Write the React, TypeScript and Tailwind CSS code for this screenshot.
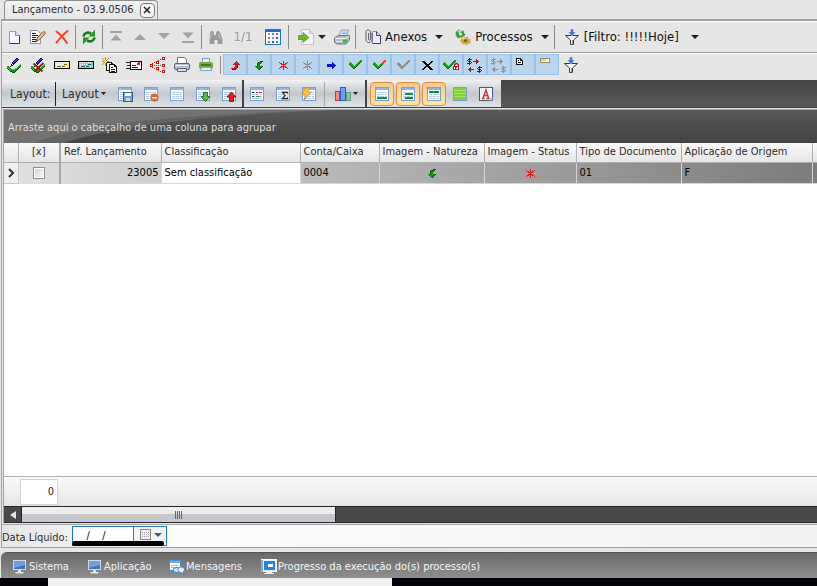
import React from "react";

type Kids = { children?: React.ReactNode };

/* ---------- drawing helpers ---------- */

function Glyph({ children, crisp = false }: Kids & { crisp?: boolean }) {
  return (
    <svg
      viewBox="0 0 16 16"
      className="size-4 shrink-0"
      fill="none"
      shapeRendering={crisp ? "crispEdges" : "auto"}
      aria-hidden="true"
    >
      {children}
    </svg>
  );
}

function Caret({ blue = false }: { blue?: boolean }) {
  return (
    <svg viewBox="0 0 8 4" className="h-1 w-2 shrink-0" aria-hidden="true">
      <path d="M0 0h8L4 4z" fill={blue ? "#3d5a8c" : "#222"} />
    </svg>
  );
}

function SmallCaret() {
  return (
    <svg viewBox="0 0 5 3" className="h-[3px] w-[5px] shrink-0" aria-hidden="true">
      <path d="M0 0h5L2.500 3z" fill="#222" />
    </svg>
  );
}

function PixelMap({ rows, colors, x: left = 0, y: top = 0 }: { rows: string[]; colors: Record<string, string>; x?: number; y?: number }) {
  return (
    <g shapeRendering="crispEdges">
      {rows.flatMap((row, y) =>
        row.split("").map((c, x) =>
          colors[c] ? <rect key={`${x}-${y}`} x={left + x} y={top + y} width="1" height="1" fill={colors[c]} /> : null,
        ),
      )}
    </g>
  );
}

/* ---------- main toolbar icons ---------- */

const NewDoc = () => (
  <Glyph>
    <path d="M3.500 2.500h6l4 4v8h-10z" fill="#f7f7ff" stroke="#9a99bd" />
    <path d="M9.500 2.500v4h4" fill="#dfe0f2" stroke="#8b8bb0" />
    <path d="M13.500 6.500v8h-10" stroke="#35345a" />
  </Glyph>
);
const EditDoc = () => (
  <Glyph>
    <path d="M.5 1.500h7l3 3v10H.5z" fill="#fff" stroke="#8a94b4" />
    <path d="M2 4.500h4M2 6.500h6M2 8.500h4M2 10.500h6M2 12.500h5" stroke="#1f1f3c" />
    <path d="M6 12l1.200-3.200L13 2.500l2.300 2L9.300 11z" fill="#e8b98a" stroke="#6d4326" strokeWidth=".8" />
    <path d="M13 2.500l1-1 2 2-.8 1z" fill="#e27b62" />
  </Glyph>
);
const RedCross = () => (
  <Glyph>
    <path d="M2.500 2.500C6 5 10 9.500 13 14M13.500 2C9.500 5 5.500 9.500 2.500 13.500" stroke="#ff3b1d" strokeWidth="2" strokeLinecap="round" />
  </Glyph>
);
const Refresh = () => (
  <Glyph>
    <path d="M2.500 7.500C2.800 4.500 6 2.500 10 4.500" stroke="#13801a" strokeWidth="2.600" />
    <path d="M14 .8v6.700H7.500z" fill="#1a9a20" />
    <path d="M13.500 8.500c-.3 3-3.500 5-7.500 3" stroke="#13801a" strokeWidth="2.600" />
    <path d="M2 15.200V8.500h6.500z" fill="#1a9a20" />
  </Glyph>
);
const First = () => <Glyph><path d="M2 2h12v2H2zM8 5.500l5.500 6h-11z" fill="#a3a3a3" /></Glyph>;
const Previous = () => <Glyph><path d="M8 5l6 6H2z" fill="#a3a3a3" /></Glyph>;
const Next = () => <Glyph><path d="M8 10L2 4h12z" fill="#a3a3a3" /></Glyph>;
const Last = () => <Glyph><path d="M2 12h12v2H2zM8 9.500L2.500 3.500h11z" fill="#a3a3a3" /></Glyph>;
const Binoculars = () => (
  <Glyph>
    <path d="M3 4l1-2h2l1 2v2h2V4l1-2h2l1 2 2.500 6v5h-5v-4h-3v4h-5v-5z" fill="#9b9b9b" />
    <path d="M4.500 5L3 10M11.500 5l1.500 5" stroke="#cfcfcf" strokeWidth=".8" />
  </Glyph>
);
const Calendar = () => (
  <Glyph crisp>
    <rect width="16" height="16" fill="#1c6fd8" />
    <rect x="1" y="3" width="14" height="12" fill="#f4f8ff" />
    <path d="M3 4h2v2H3zM7 8h2v2H7z" fill="#9a8cc4" />
    <path d="M7 4h2v2H7zM3 12h2v2H3z" fill="#3b93e6" />
    <path d="M11 4h2v2h-2zM3 8h2v2H3z" fill="#e2533f" />
    <path d="M11 8h2v2h-2zM7 12h2v2H7z" fill="#3a55a8" />
    <path d="M11 12h2v2h-2z" fill="#43a047" />
  </Glyph>
);
const Export = () => (
  <Glyph>
    <path d="M3.500.5h8l4 4v11h-12z" fill="#f6f6f6" stroke="#c4c4c4" />
    <path d="M11.500.5v4h4" fill="#ddd" stroke="#c4c4c4" />
    <path d="M0 6.500h5V3.500l6 5-6 5v-3H0z" fill="#6fb62a" stroke="#5a9a20" strokeWidth=".8" />
  </Glyph>
);
const PrinterLit = () => (
  <Glyph>
    <path d="M5 6.500L7 1h8l-2.500 5.500z" fill="#dcecfb" stroke="#7e93ad" strokeWidth=".8" />
    <path d="M8 3h5M7.500 4.500h5" stroke="#6f9bd1" strokeWidth=".7" />
    <path d="M.5 9L4 6.500h11.500V11L12 15H2.500L.5 13z" fill="#b4b9c6" stroke="#5c6070" strokeWidth=".8" />
    <path d="M1 9.500h11l3-2.500" stroke="#f5f5f5" />
    <path d="M2 12.500h6" stroke="#eee" />
    <path d="M9 10.500h4v3H9z" fill="#17c837" />
  </Glyph>
);
const Attach = () => (
  <Glyph>
    <path d="M7.500 2.500h4l4 4v8h-8z" fill="#ececfa" stroke="#8b8ab0" />
    <path d="M11.500 2.500v4h4M15.500 6.500v8h-8" stroke="#3d3b63" />
    <path d="M3.500 4v6c0 1.500 2 1.500 2 0V3c0-2.700-4.500-2.700-4.500 0v7.500c0 4 5.500 4 6 .5V4" stroke="#5d6069" />
  </Glyph>
);
const Gears = () => (
  <Glyph>
    <path d="M1 2.500L4 .5l2 1.500 2.500-.5L9 4l1.500 1.500L9 7.500 7.500 9 5 8.500 3 9.500 1.500 7.500.5 5z" fill="#3f9f45" />
    <path d="M2 2.500L4.500 1 7 2.500 4 4z" fill="#a5e39a" />
    <circle cx="5.500" cy="5" r="1.500" fill="#e6f2e2" />
    <path d="M6 8l2.500-1L10 8.500l2.500-1 1 2 2 .5-.5 2.500 1 1.500-2.500.5-1.500 1.500-2-1-2.500.5-.5-2-2-1 1-2z" fill="#d7a62c" />
    <path d="M7 8.500l1.500-.5 1.500 1.500 2.500-.5L10 10.500 7 10z" fill="#f7df85" />
    <circle cx="10.500" cy="11.500" r="1.600" fill="#6e5a1e" />
  </Glyph>
);
const Funnel = () => (
  <Glyph>
    <path d="M1.500 6.500h13L9.500 11v4.500h-3V11z" fill="#f7f7f7" stroke="#33373d" />
    <path d="M8.500 11v4.500" stroke="#9b9b9b" />
    <path d="M6.500 0h3v3h2.500L8 7 4 3h2.500z" fill="#3976cf" stroke="#dfeafb" strokeWidth=".5" />
  </Glyph>
);

/* ---------- second toolbar icons ---------- */

const PEN_CHECK = [
  ".........kk...",
  "........kbBk..",
  ".......kbBk...",
  "......kbBk....",
  ".....kbBk.....",
  ".....kBk......",
  "....kwk......G",
  "....kk......Gg",
  "gg.k.......Ggd",
  "Ggg.......Ggd.",
  "dGgg....GGgd..",
  ".dGggGGGggd...",
  "..dGgggggd....",
  "...ddgggd.....",
  ".....ddd......",
];
const PenCheck = ({ crossed = false }: { crossed?: boolean }) => (
  <Glyph>
    <PixelMap x={1} y={1} rows={PEN_CHECK} colors={{ k: "#0a0a2a", b: "#3a50ff", B: "#1224e6", w: "#fff", g: "#0c9a12", G: "#3fd040", d: "#064f0a" }} />
    {crossed && <path d="M3.500 6.500l9 8M13.500 6L5 14" stroke="#98141a" strokeWidth="1.800" />}
  </Glyph>
);
const Card = ({ fill, ink }: { fill: string; ink: string }) => (
  <Glyph crisp>
    <rect x="0" y="4" width="16" height="8" fill="#000" />
    <rect x="1" y="5" width="14" height="6" fill={fill} />
    <path d="M2 5.500h12M2 7.500h12M2 9.500h12" stroke="#fff" strokeDasharray="1 1" />
    <path d="M3 9h4v1H3zM8 9h3v1H8zM10 7h3v1h-3z" fill={ink} />
  </Glyph>
);
const PAGES = [
  "...s....s.......",
  "s..s..s.........",
  ".s.s.s..........",
  "..sYs...........",
  "ssYYYss.........",
  "..sYskkkkk......",
  ".s.skwwwwkk.....",
  "s..skwwkkkkkk...",
  "...skwwkwwwwkk..",
  "....kwwkwwwwkkk.",
  "....kwwkwkkwwwk.",
  "....kwwkwwwwwwk.",
  "....kwwkwkkkkwk.",
  "....kkkkwwwwwwk.",
  ".......kwkkkkwk.",
  ".......kkkkkkkk.",
];
const NewPages = () => <Glyph><PixelMap rows={PAGES} colors={{ s: "#b89a1c", Y: "#ffef5a", k: "#111", w: "#fff" }} /></Glyph>;
const Mail = () => (
  <Glyph crisp>
    <rect x="4" y="4" width="12" height="9" fill="#000" />
    <rect x="5" y="5" width="10" height="7" fill="#fff" />
    <path d="M0 5h5v1H0zM1 8h3v1H1zM0 11h5v1H0zM6 8h4v1H6zM6 10h6v1H6z" fill="#222" />
    <path d="M12 5h2v3h-2z" fill="#d12a2a" />
    <path d="M11 6h1v2h-1z" fill="#2855d8" />
  </Glyph>
);
const NODES = [
  "............rrr",
  "............rwr",
  "..........r.rrr",
  "........r......",
  "......rrr......",
  "....r.rwr......",
  "..r...rrr......",
  "rrr.........rrr",
  "rwr.r.r.r.r.rwr",
  "rrr.........rrr",
  "..r...rrr......",
  "....r.rwr......",
  "......rrr......",
  "........r...rrr",
  "..........r.rwr",
  "............rrr",
];
const Nodes = () => <Glyph><PixelMap rows={NODES} colors={{ r: "#d31414", w: "#fff" }} /></Glyph>;
const Printer = () => (
  <Glyph>
    <path d="M3.500 7V.5h7l2 2V7" fill="#fff" stroke="#68748a" />
    <rect x=".5" y="6.500" width="15" height="6" rx="1.500" fill="#b9c3d3" stroke="#566378" />
    <path d="M1.500 8.500h13" stroke="#f2f6fb" />
    <path d="M3.500 11.500h9v3h-9z" fill="#cfe3fb" stroke="#566378" />
  </Glyph>
);
const PrinterGreen = () => (
  <Glyph>
    <rect x="4.500" y="1.500" width="7" height="5" fill="#e9f3fd" stroke="#7aa3cf" />
    <rect x="1" y="5" width="14" height="7" rx="2" fill="#74ad33" />
    <path d="M3 7h10v2H3z" fill="#49772a" />
    <path d="M3.500 10.500h9l1 3h-11z" fill="#eef6ff" stroke="#7aa3cf" />
  </Glyph>
);

const RED_UP = [".....r", "....rrr", "...rrrrr", "..rrrrrrr", "....rrd", "....rrd", "...rrrd", "rrrrrd", ".dddd"];
const GREEN_DOWN = [".....ddd", "...ddgg", "..dggd", "..dgg", "..dgg", "gggggggd", ".gggggd", "..gggd", "...gd"];
const STAR = ["....r", "r...r...r", ".rr.r.rr", "..rrrrr", "....r", "..rrrrr", ".rr.r.rr", "r...r...r", "....r"];
const CHECK = [
  "...........tt",
  "..........ttT",
  ".g.......ttT",
  "ggg.....ttT",
  "dggg...ggd",
  ".dggg.ggd",
  "..dggggd",
  "...dggd",
  "....dd",
];
const BLACK_X = [
  "kkk......kk",
  ".kkk....kk",
  "..kkk..kk",
  "...kkkkk",
  "....kkk",
  "...kkkkk",
  "..kk..kkk",
  ".kk....kkk",
  "kk......kkk",
];
const SWAP = [
  "..b", ".bbbb....r", "b.b......rr", ".bbb..rrrrrr", "..b.b....rr", "bbbb.....r", "..b", "",
  "............b", "...r.......bbbb", "..rr......b.b", ".rrrrrr....bbb", "..rr........b.b", "...r......bbbb", "............b",
];
const CurveUp = () => <Glyph><PixelMap x={4} y={4} rows={RED_UP} colors={{ r: "#f20d0d", d: "#8d0b0b" }} /></Glyph>;
const CurveDown = () => <Glyph><PixelMap x={4} y={4} rows={GREEN_DOWN} colors={{ g: "#0c9412", d: "#064f0a" }} /></Glyph>;
const Star = ({ color }: { color: string }) => <Glyph><PixelMap x={4} y={4} rows={STAR} colors={{ r: color }} /></Glyph>;
const BlueArrow = () => (
  <Glyph>
    <PixelMap x={4} y={4} rows={["", ".....b", ".....bb", "bbbbbbbb", "bbbbbbbbb", "bbbbbbbb", ".....bb", ".....b"]} colors={{ b: "#0a14e0" }} />
  </Glyph>
);
const Check = ({ color, dark, tip }: { color: string; dark: string; tip?: string }) => (
  <Glyph>
    <PixelMap x={2} y={3} rows={CHECK} colors={{ g: color, d: dark, t: tip ?? color, T: tip ?? dark }} />
  </Glyph>
);
const BlackX = () => <Glyph><PixelMap x={3} y={4} rows={BLACK_X} colors={{ k: "#000" }} /></Glyph>;
const LOCK = ["..rrr.", ".rr.rr", ".r...r", "rrrrrr", "rwrrwr", "rwrwwr", "rrrrrr"];
const CheckLock = () => (
  <Glyph>
    <PixelMap x={0} y={3} rows={CHECK} colors={{ g: "#12a312", d: "#066b0a", t: "#12a312", T: "#066b0a" }} />
    <PixelMap x={10} y={6} rows={LOCK} colors={{ r: "#e01515", w: "#fff" }} />
  </Glyph>
);
const Swap = ({ muted = false }: { muted?: boolean }) => (
  <Glyph>
    <PixelMap y={1} rows={SWAP} colors={muted ? { b: "#8a8f96", r: "#8a8f96" } : { b: "#1520b4", r: "#b01414" }} />
  </Glyph>
);
const TINY_DOC = ["kkkkk", "kwwwkk", "kwkwkkk", "kwwwwwk", "kwkkkwk", "kwwwwwk", "kkkkkkk"];
const TinyDoc = () => <Glyph><PixelMap x={0} y={1} rows={TINY_DOC} colors={{ k: "#111", w: "#fff" }} /></Glyph>;
const TinyCard = () => (
  <Glyph crisp>
    <rect x="0" y="1" width="10" height="5" fill="#8b8b8b" />
    <rect x="1" y="2" width="8" height="3" fill="#fffbe0" />
    <path d="M1 2h5v2H1z" fill="#ffd91c" />
  </Glyph>
);

/* ---------- layout toolbar icons ---------- */

const Sheet = ({ children }: Kids) => (
  <Glyph>
    <rect x="1.500" y="1.500" width="13" height="13" fill="#fff" stroke="#7ba2d8" />
    <path d="M2 2h12v2H2z" fill="#8fb4e8" />
    <path d="M3 6.500h10M3 8.500h10M3 10.500h10M3 12.500h10" stroke="#b4c9e6" />
    <path d="M6.500 5v9M10.500 5v9" stroke="#eef3fa" />
    {children}
  </Glyph>
);
const SheetSave = () => (
  <Sheet>
    <rect x="6.500" y="6.500" width="9" height="9" fill="#6f9fdc" stroke="#2d5f9f" />
    <path d="M8 7h6v3H8z" fill="#fff" /><path d="M9 12h4v3H9z" fill="#d7e88f" />
  </Sheet>
);
const SheetRemove = () => (
  <Sheet>
    <circle cx="11.500" cy="11.500" r="4" fill="#e4632a" />
    <path d="M9 11h5v1.500H9z" fill="#fff" />
  </Sheet>
);
const SheetDown = () => <Sheet><path d="M8.500 6.500h4v4H15L10.500 15.500 6 10.500h2.500z" fill="#5fb548" stroke="#2c7422" /></Sheet>;
const SheetUp = () => <Sheet><path d="M8.500 15.500h4v-4.500H15L10.500 6 6 11h2.500z" fill="#e21b1b" stroke="#a31010" /></Sheet>;
const SheetMarks = () => (
  <Sheet>
    <path d="M3 6h2v1H3z" fill="#222" /><path d="M7 6h2v1H7zM10 6h3v1h-3z" fill="#cf2734" />
    <path d="M3 10h2v1H3z" fill="#2b3f66" /><path d="M7 10h4v1H7z" fill="#2f9f3f" />
  </Sheet>
);
const SheetSum = () => (
  <Sheet>
    <rect x="6" y="5" width="8" height="9" fill="#e2e2e2" />
    <path d="M12.500 7.500v-1.200H7.500L10 9.500l-2.500 3.200h5v-1.200" stroke="#222" strokeWidth="1.200" />
  </Sheet>
);
const SheetFlash = () => <Sheet><path d="M4 2h5L7 6h3.500L3 14l1.500-5H1z" fill="#f6c343" stroke="#c98d1d" strokeWidth=".7" /></Sheet>;
const BarChart = () => (
  <Glyph>
    <rect x=".5" y="5.500" width="4" height="9" fill="#f58b8b" stroke="#c8333d" />
    <rect x="5.500" y="1.500" width="5" height="13" fill="#6f9ff0" stroke="#2a5ebd" />
    <rect x="11.500" y="6.500" width="4" height="8" fill="#8cc98e" stroke="#5f9b8a" />
  </Glyph>
);
const SheetBottom = () => <Sheet><path d="M3 11h10v2H3z" fill="#0c8f3e" /></Sheet>;
const SheetMiddle = () => <Sheet><path d="M5 7h8v2H5zM5 11h8v2H5z" fill="#0c8f3e" /></Sheet>;
const SheetTop = () => <Sheet><path d="M3 5h10v2H3z" fill="#0c8f3e" /></Sheet>;
const SheetGreen = () => (
  <Glyph>
    <rect x="1.500" y="1.500" width="13" height="13" fill="#7fd42c" stroke="#7ba2d8" />
    <path d="M2 4.500h12M2 7.500h12M2 10.500h12" stroke="#a6e568" />
  </Glyph>
);
const LetterA = () => (
  <Glyph>
    <rect x="1.500" y="1.500" width="13" height="13" fill="#eef2fb" stroke="#4a577f" />
    <path d="M4 12.500h2.500M8.500 12.500h3M5 12l3-8 2.500 8M6 9.500h4" stroke="#c8352c" strokeWidth="1.400" />
    <path d="M11 14.500l3.500-3.500v3.500z" fill="#9db8e6" />
  </Glyph>
);

/* ---------- status bar icons ---------- */

const Monitor = () => (
  <Glyph>
    <rect x="1.500" y="1.500" width="12" height="9" fill="#3c74bd" stroke="#cfdae6" />
    <path d="M2 2h11v4L2 9z" fill="#6ba0e2" />
    <path d="M6 11h3v2h2.500v1.500h-8V13H6z" fill="#dfe5ea" />
  </Glyph>
);
const Messages = () => (
  <Glyph>
    <rect x=".5" y="1.500" width="11" height="10" fill="#fff" stroke="#4e8fd0" />
    <path d="M1 2h10v2H1z" fill="#71abe4" /><path d="M2 6.500h7M2 8.500h7" stroke="#8fb9e4" />
    <ellipse cx="8" cy="11" rx="4" ry="2.500" fill="#d8ebfb" stroke="#3b7fc0" />
    <path d="M9.500 9c2-2 6-1 6 1.500 0 1-.5 1.800-1.200 2.300l.5 2.500-2.600-1.800c-2.700 0-4-2-2.700-4.500z" fill="#e4f1fd" stroke="#3b7fc0" />
  </Glyph>
);
const Progress = () => (
  <Glyph>
    <rect x=".5" y=".5" width="15" height="12" fill="#e8f0fa" stroke="#fff" />
    <rect x="3" y="2" width="11" height="9" fill="#1e84ee" />
    <path d="M1 1v12" stroke="#2a5ea8" />
    <path d="M7 4h5v4H7z" fill="#fff" /><path d="M7 4h5v1H7z" fill="#6c7a8c" />
    <path d="M5 13h6v1h2v1H3v-1h2z" fill="#f4f4f4" />
  </Glyph>
);

/* ---------- controls ---------- */

function ToolButton({ label, children, disabled }: Kids & { label: string; disabled?: boolean }) {
  return (
    <button type="button" aria-label={label} title={label} disabled={disabled} className="flex h-6 w-6 shrink-0 items-center justify-center">
      {children}
    </button>
  );
}
const Rule = () => <span className="mx-px h-6 w-px shrink-0 bg-[#8c8c8c]" />;

function Toggle({ label, children, corner }: Kids & { label: string; corner?: boolean }) {
  return (
    <button
      type="button"
      aria-label={label}
      title={label}
      className={
        corner
          ? "flex h-[21px] w-6 shrink-0 items-start justify-start border border-[#93c3ee] bg-[#bad5ec] px-1 py-0.5"
          : "flex h-[21px] w-6 shrink-0 items-center justify-center border border-[#93c3ee] bg-[#bad5ec]"
      }
    >
      {children}
    </button>
  );
}

function LayoutButton({ label, children, active }: Kids & { label: string; active?: boolean }) {
  return (
    <button
      type="button"
      aria-label={label}
      title={label}
      className={
        active
          ? "mx-px flex size-6 shrink-0 items-center justify-center rounded-sm border border-[#e58a3c] bg-linear-to-b from-[#f9c98c] to-[#ffe7a0]"
          : "mx-px flex size-6 shrink-0 items-center justify-center"
      }
    >
      {children}
    </button>
  );
}

const toggles: [string, React.ReactNode, boolean?][] = [
  ["Saída", <CurveUp />],
  ["Entrada", <CurveDown />],
  ["Em aberto", <Star color="#ee1111" />],
  ["Inativo", <Star color="#888c92" />],
  ["Transferir", <BlueArrow />],
  ["Confirmado", <Check color="#12a312" dark="#066b0a" />],
  ["Parcial", <Check color="#12a312" dark="#066b0a" tip="#f2471c" />],
  ["Pendente", <Check color="#8e9297" dark="#8e9297" />],
  ["Cancelado", <BlackX />],
  ["Bloqueado", <CheckLock />],
  ["Troca", <Swap />],
  ["Troca inativa", <Swap muted />],
  ["Documento", <TinyDoc />, true],
  ["Etiqueta", <TinyCard />, true],
];

const headers = ["Ref. Lançamento", "Classificação", "Conta/Caixa", "Imagem - Natureza", "Imagem - Status", "Tipo de Documento", "Aplicação de Origem"];

export default function App() {
  return (
    <div className="flex min-h-screen flex-col overflow-hidden bg-[#e6e6e6] font-['DejaVu_Sans_Condensed','DejaVu_Sans',sans-serif] text-[11px] leading-4 text-[#2b2b2b]">
      {/* document tab */}
      <div role="tablist" className="flex h-[19px] items-end pl-1">
        <div className="flex h-[19px] items-center gap-1.5 rounded-t-sm border border-b-0 border-[#8e8e8e] bg-linear-to-b from-[#f2f2f2] to-[#e6e6e6] pr-0.5 pl-[7px]">
          <button type="button" role="tab" aria-selected="true" className="whitespace-nowrap">Lançamento - 03.9.0506</button>
          <button type="button" aria-label="Fechar" className="flex size-[15px] items-center justify-center rounded-sm border border-[#777] bg-[#f4f4f4]">
            <svg viewBox="0 0 8 8" className="size-2" aria-hidden="true"><path d="M1 1l6 6M7 1L1 7" stroke="#222" strokeWidth="1.500" /></svg>
          </button>
        </div>
      </div>

      <main className="ml-px flex flex-1 flex-col border-t-2 border-l border-[#a0a0a0]">
        {/* main toolbar */}
        <div role="toolbar" aria-label="Principal" className="flex h-8 items-center border-t border-b border-t-white border-b-[#9c9c9c] text-[13px] text-[#111]">
          <ToolButton label="Novo"><NewDoc /></ToolButton>
          <ToolButton label="Editar"><EditDoc /></ToolButton>
          <ToolButton label="Excluir"><RedCross /></ToolButton>
          <Rule />
          <ToolButton label="Atualizar"><Refresh /></ToolButton>
          <Rule />
          <ToolButton label="Primeiro" disabled><First /></ToolButton>
          <ToolButton label="Anterior" disabled><Previous /></ToolButton>
          <ToolButton label="Próximo" disabled><Next /></ToolButton>
          <ToolButton label="Último" disabled><Last /></ToolButton>
          <Rule />
          <ToolButton label="Localizar" disabled><Binoculars /></ToolButton>
          <span className="w-8 text-center text-[#9a9a9a]">1/1</span>
          <button type="button" aria-label="Calendário" className="flex h-6 w-7 shrink-0 items-center justify-center"><Calendar /></button>
          <Rule />
          <button type="button" aria-label="Exportar" className="flex h-6 shrink-0 items-center gap-1 pr-1 pl-2"><Export /><Caret /></button>
          <ToolButton label="Imprimir"><PrinterLit /></ToolButton>
          <Rule />
          <button type="button" className="flex h-6 shrink-0 items-center gap-1 px-2"><Attach />Anexos<span className="pl-1"><Caret /></span></button>
          <button type="button" className="flex h-6 shrink-0 items-center gap-1 px-1"><Gears />Processos<span className="pl-1"><Caret /></span></button>
          <Rule />
          <button type="button" className="flex h-6 shrink-0 items-center gap-1 px-2 whitespace-nowrap"><Funnel />[Filtro: !!!!!Hoje]<span className="pl-2"><Caret /></span></button>
        </div>

        {/* status toolbar */}
        <div role="toolbar" aria-label="Lançamento" className="flex h-[27px] items-center border-t border-white pb-[5px]">
          <ToolButton label="Baixar"><PenCheck /></ToolButton>
          <ToolButton label="Estornar"><PenCheck crossed /></ToolButton>
          <ToolButton label="Cheque"><Card fill="#fff04d" ink="#7a6c00" /></ToolButton>
          <ToolButton label="Boleto"><Card fill="#5fe3ee" ink="#11666e" /></ToolButton>
          <ToolButton label="Duplicar"><NewPages /></ToolButton>
          <ToolButton label="Enviar"><Mail /></ToolButton>
          <ToolButton label="Rateio"><Nodes /></ToolButton>
          <ToolButton label="Imprimir lançamento"><Printer /></ToolButton>
          <ToolButton label="Imprimir recibo"><PrinterGreen /></ToolButton>
          <span className="mx-0.5 h-[18px] w-px shrink-0 bg-[#8c8c8c]" />
          {toggles.map(([label, icon, corner]) => (
            <Toggle key={label} label={label} corner={corner}>{icon}</Toggle>
          ))}
          <ToolButton label="Filtrar"><Funnel /></ToolButton>
        </div>

        {/* layout toolbar */}
        <div className="flex h-7 border-b border-[#3a3a3a] bg-linear-to-b from-[#454545] to-[#595959]">
          <div role="toolbar" aria-label="Layout" className="flex h-full items-center bg-linear-to-b from-[#f0f1f2] via-[#c3c8ce] to-[#dfe4e8] pr-0.5 text-[12px]">
            <span className="w-[53px] pl-2">Layout:</span>
            <span className="h-6 w-px bg-[#222]" />
            <button type="button" className="flex h-6 w-[56px] items-center gap-0.5 pl-1.5">Layout<SmallCaret /></button>
            <LayoutButton label="Salvar layout"><SheetSave /></LayoutButton>
            <LayoutButton label="Remover layout"><SheetRemove /></LayoutButton>
            <LayoutButton label="Layout padrão"><Sheet /></LayoutButton>
            <LayoutButton label="Importar"><SheetDown /></LayoutButton>
            <LayoutButton label="Exportar layout"><SheetUp /></LayoutButton>
            <span className="h-full w-0.5 bg-[#444]" />
            <LayoutButton label="Colunas"><SheetMarks /></LayoutButton>
            <LayoutButton label="Totais"><SheetSum /></LayoutButton>
            <LayoutButton label="Formatação"><SheetFlash /></LayoutButton>
            <span className="mx-0.5 h-6 w-px bg-[#a4a8ad]" />
            <button type="button" aria-label="Gráfico" className="flex h-6 w-[38px] items-center justify-center gap-0.5"><BarChart /><SmallCaret /></button>
            <span className="mr-0.5 h-full w-0.5 bg-[#444]" />
            <LayoutButton label="Rodapé" active><SheetBottom /></LayoutButton>
            <LayoutButton label="Rodapé de grupo" active><SheetMiddle /></LayoutButton>
            <LayoutButton label="Painel de grupo" active><SheetTop /></LayoutButton>
            <LayoutButton label="Linhas alternadas"><SheetGreen /></LayoutButton>
            <LayoutButton label="Fonte"><LetterA /></LayoutButton>
          </div>
        </div>

        {/* grid */}
        <section id="lancamentos" className="mt-px ml-px flex flex-1 flex-col border-t border-l border-[#a5a5a5] bg-white">
          <div className="relative flex h-[33px] items-center overflow-hidden bg-linear-to-b from-[#575757] to-[#434343] px-1 pt-0.5">
            <svg viewBox="0 0 340 33" className="absolute top-0 left-0 h-[33px] w-[340px]" aria-hidden="true">
              <path d="M0 0H335C220 5 120 13 60 33H0z" fill="#636363" />
              <path d="M0 0H335C190 4 80 12 30 33H0z" fill="#727272" />
            </svg>
            <span className="relative text-[#dedede]">Arraste aqui o cabeçalho de uma coluna para agrupar</span>
          </div>

          <table className="w-full table-fixed border-collapse">
            <colgroup>
              <col className="w-[14px]" />
              <col className="w-[42px]" />
              <col className="w-[101px]" />
              <col className="w-[139px]" />
              <col className="w-[79px]" />
              <col className="w-[105px]" />
              <col className="w-[92px]" />
              <col className="w-[105px]" />
              <col className="w-[131px]" />
              <col />
            </colgroup>
            <thead>
              <tr className="h-[19px] bg-linear-to-b from-[#fafafa] to-[#e6e6e6]">
                <td className="border-r border-b border-[#b0b0b0] p-0" />
                <th className="border-r-2 border-b border-[#a8a8a8] p-0 text-center font-normal">[x]</th>
                {headers.map((h) => (
                  <th key={h} className="overflow-hidden border-r border-b border-[#b0b0b0] p-0 pl-[3px] text-left font-normal whitespace-nowrap">{h}</th>
                ))}
                <td className="border-b border-[#b0b0b0] p-0" />
              </tr>
            </thead>
            <tbody>
              <tr className="h-[21px] bg-linear-to-r from-[#e2e2e2] to-[#7c7c7c] text-black">
                <td className="border-r border-b border-[#c3c9d2] bg-[#f0f0f0] p-0">
                  <svg viewBox="0 0 8 10" className="mx-auto h-2.5 w-2" aria-hidden="true"><path d="M2 1l4 4-4 4" fill="none" stroke="#333" strokeWidth="2" /></svg>
                </td>
                <td className="border-r-2 border-b border-[#a8a8a8] border-b-[#d7dde6] p-0">
                  <input type="checkbox" aria-label="Selecionar lançamento 23005" className="mx-auto block size-3 appearance-none border border-[#8e8e8e] bg-linear-to-br from-[#cfcfcf] to-white outline-1 -outline-offset-2 outline-white" />
                </td>
                <td className="border-r border-b border-[#d0d7e2] p-0 pr-0.5 text-right">23005</td>
                <td className="border-r border-b border-[#d0d7e2] bg-white p-0 pl-[3px]">Sem classificação</td>
                <td className="border-r border-b border-[#d0d7e2] p-0 pl-[3px]">0004</td>
                <td className="border-r border-b border-[#d0d7e2] p-0"><div className="flex justify-center"><CurveDown /></div></td>
                <td className="border-r border-b border-[#d0d7e2] p-0"><div className="flex justify-center"><Star color="#ee1111" /></div></td>
                <td className="border-r border-b border-[#d0d7e2] p-0 pl-[3px]">01</td>
                <td className="border-r border-b border-[#d0d7e2] p-0 pl-[3px]">F</td>
                <td className="border-b border-[#d0d7e2] p-0" />
              </tr>
            </tbody>
          </table>

          <div className="flex-1" />

          <div className="flex h-[30px] items-center border-t border-[#b0b0b0] bg-linear-to-b from-[#fafafa] to-[#e5e5e5] pl-4">
            <output className="flex h-[26px] w-[38px] items-center justify-end border border-[#d2d2d2] bg-white pr-[3px]">0</output>
          </div>

          <div className="flex h-[17px] border-y border-[#25252f] bg-[#494949]">
            <button type="button" aria-label="Rolar para a esquerda" className="flex w-[18px] items-center justify-center border-r border-[#25252f]">
              <svg viewBox="0 0 6 8" className="h-2 w-1.5" aria-hidden="true"><path d="M6 0v8L0 4z" fill="#e4e4e4" /></svg>
            </button>
            <div className="flex-1">
              <div role="scrollbar" aria-label="Rolagem horizontal" aria-controls="lancamentos" aria-valuenow={0} className="flex h-full w-[314px] max-w-full items-center justify-center gap-px border-r border-[#25252f] bg-linear-to-b from-[#ececec] from-45% via-[#c6c6ca] via-50% to-[#c9c9cd]">
                <span className="h-2 w-px bg-[#666]" />
                <span className="h-2 w-px bg-[#666]" />
                <span className="h-2 w-px bg-[#666]" />
                <span className="h-2 w-px bg-[#666]" />
              </div>
            </div>
          </div>
        </section>

        {/* net date */}
        <div className="mt-px flex h-[23px] items-center border-t border-[#a5a5a5] bg-linear-to-r from-[#e6e6e6] via-[#fdfdfd] via-20% to-[#f2f2f2]">
          <label htmlFor="data-liquido" className="w-[70px] pt-1 whitespace-nowrap">Data Líquido:</label>
          <div className="relative flex h-5 w-[95px] border border-[#1a7ad4] bg-white">
            <input id="data-liquido" defaultValue="   /    /" className="w-[60px] min-w-0 pl-1 text-[11px] whitespace-pre text-black outline-none" />
            <button type="button" aria-label="Abrir calendário" className="flex flex-1 items-center gap-0.5 border-l border-[#1a7ad4] bg-[#f4f4f4] pb-0.5 pl-1.5">
              <svg viewBox="0 0 12 12" className="size-3" aria-hidden="true">
                <rect x=".5" y=".5" width="10" height="10" fill="#f4eeee" stroke="#8e8583" />
                <path d="M2 3.500h8M2 5.500h8M2 7.500h8" stroke="#9a9aa8" strokeDasharray="1 1" />
              </svg>
              <Caret blue />
            </button>
            <span className="absolute -bottom-px -left-px h-[5px] w-[92px] rounded-sm bg-black" />
          </div>
        </div>
      </main>

      {/* status bar */}
      <footer>
        <div className="ml-px border-t border-[#a0a0a0] pt-1">
          <nav aria-label="Painéis" className="flex h-[26px] items-center rounded-tl-md border-t border-[#555] bg-linear-to-b from-[#6a6a6a] to-[#8f8f8f] pt-0.5 pl-[11px] text-[#f4f4f4]">
            <button type="button" className="flex w-[75px] items-center gap-px"><Monitor />Sistema</button>
            <button type="button" className="flex w-[82px] items-center gap-px"><Monitor />Aplicação</button>
            <button type="button" className="flex w-[92px] items-center gap-px"><Messages />Mensagens</button>
            <button type="button" className="flex items-center gap-px whitespace-nowrap"><Progress />Progresso da execução do(s) processo(s)</button>
          </nav>
        </div>
        <div className="flex h-2 bg-[#02040a] pl-12"><span className="w-[344px] bg-[#f0f0f0]" /></div>
      </footer>
    </div>
  );
}
